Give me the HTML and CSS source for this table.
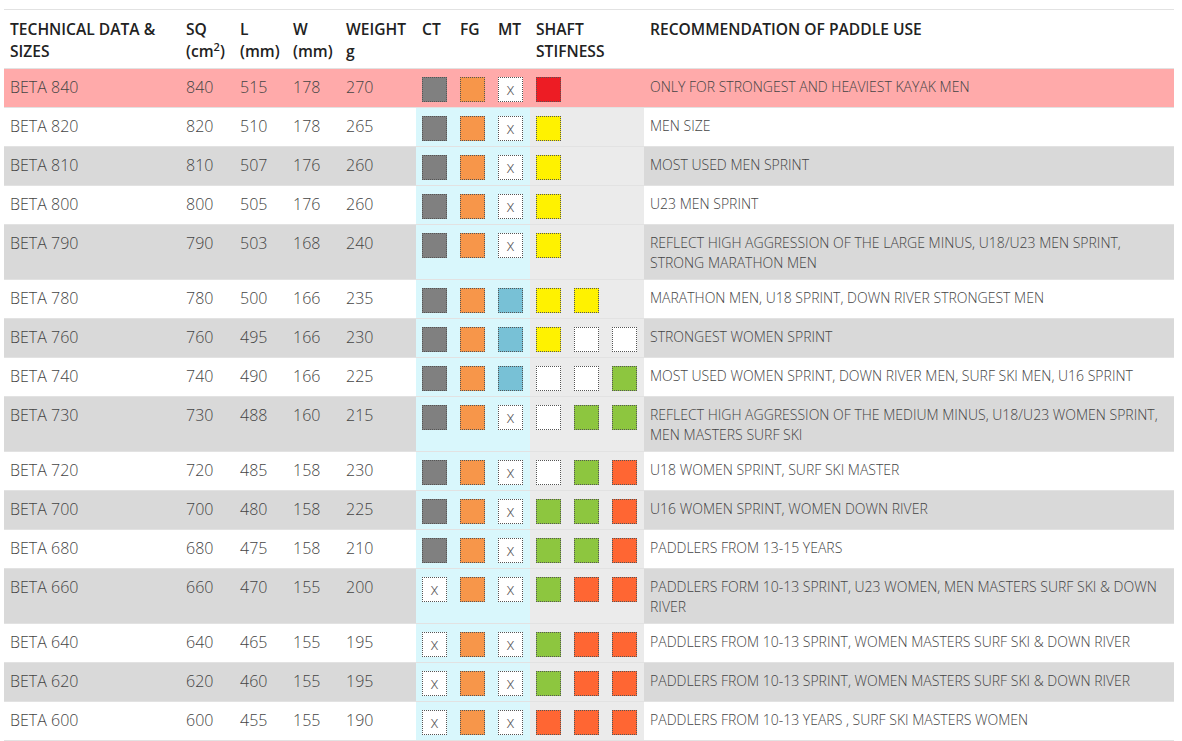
FILE: index.html
```html
<!DOCTYPE html>
<html>
<head>
<meta charset="utf-8">
<link rel="stylesheet" href="styles.css">
</head>
<body>
<div class="wrap">
<table class="spec">
  <colgroup>
    <col class="c-name"><col class="c-num"><col class="c-num2"><col class="c-num2"><col class="c-wt">
    <col class="c-box"><col class="c-box"><col class="c-box">
    <col class="c-box"><col class="c-box"><col class="c-box">
    <col class="c-rec">
  </colgroup>
  <thead>
    <tr>
      <th>TECHNICAL DATA &amp;<br>SIZES</th>
      <th>SQ<br>(cm<sup>2</sup>)</th>
      <th>L<br>(mm)</th>
      <th>W<br>(mm)</th>
      <th>WEIGHT<br>g</th>
      <th>CT</th>
      <th>FG</th>
      <th>MT</th>
      <th colspan="3">SHAFT<br>STIFNESS</th>
      <th>RECOMMENDATION OF PADDLE USE</th>
    </tr>
  </thead>
  <tbody id="rows"></tbody>
</table>
</div>
<script src="app.js"></script>
</body>
</html>
```

FILE: styles.css
```css
html, body {
  margin: 0;
  padding: 0;
  background: #fff;
}
.wrap {
  padding: 9px 8px 0 4px;
}
.spec {
  width: 1170px;
  table-layout: fixed;
  border-collapse: collapse;
  font-family: "Open Sans", "Liberation Sans", sans-serif;
  color: #444;
}
.c-name { width: 176px; }
.c-num { width: 54px; }
.c-num2 { width: 53px; }
.c-wt { width: 76px; }
.c-box { width: 38px; }
.c-rec { width: 530px; }

.spec thead tr {
  border-top: 1px solid #e2e2e2;
  border-bottom: 1px solid #e2e2e2;
}
.spec th {
  text-align: left;
  vertical-align: top;
  font-size: 15.6px;
  font-weight: 600;
  line-height: 22px;
  color: #222;
  padding: 8px 6px 6px 6px;
  white-space: nowrap;
}
.spec th sup {
  font-size: 11px;
  line-height: 0;
  vertical-align: 6px;
}
.spec td {
  vertical-align: top;
  padding: 6px 6px 8px 6px;
  font-size: 16px;
  line-height: 24px;
  font-weight: 300;
  border-bottom: 1px solid #e2e2e2;
}
.spec td.rec {
  font-size: 14px;
  line-height: 20px;
  padding: 8px 6px 6px 6px;
}
.spec td.bx {
  padding: 8px 0 0 6px;
}
.spec td.g1 { background: #d9f7fc; }
.spec td.g2 { background: #ebebeb; }
.spec tbody tr:nth-child(odd) { background: #d9d9d9; }
.spec tbody tr:nth-child(even) { background: #fff; }
.spec tbody tr.hot,
.spec tbody tr.hot td { background: #ffaaaa; }

.box {
  width: 25px;
  height: 25px;
  box-sizing: border-box;
  border: 1px dotted #555;
  font-size: 16px;
  font-weight: 300;
  line-height: 22px;
  text-align: center;
  color: #555;
}
.k-gray { background: #808080; }
.k-org { background: #f7964a; }
.k-blue { background: #78c1d6; }
.k-yel { background: #fff200; }
.k-grn { background: #8dc63f; }
.k-ro { background: #ff6633; }
.k-red { background: #ed1c24; }
.k-x, .k-w { background: #fff; }
```

FILE: app.js
```js
var data = [
  ["BETA 840", 840, 515, 178, 270, "gray", "org", "x", ["red"], "ONLY FOR STRONGEST AND HEAVIEST KAYAK MEN", true],
  ["BETA 820", 820, 510, 178, 265, "gray", "org", "x", ["yel"], "MEN SIZE"],
  ["BETA 810", 810, 507, 176, 260, "gray", "org", "x", ["yel"], "MOST USED MEN SPRINT"],
  ["BETA 800", 800, 505, 176, 260, "gray", "org", "x", ["yel"], "U23 MEN SPRINT"],
  ["BETA 790", 790, 503, 168, 240, "gray", "org", "x", ["yel"], "REFLECT HIGH AGGRESSION OF THE LARGE MINUS, U18/U23 MEN SPRINT, STRONG MARATHON MEN"],
  ["BETA 780", 780, 500, 166, 235, "gray", "org", "blue", ["yel", "yel"], "MARATHON MEN, U18 SPRINT, DOWN RIVER STRONGEST MEN"],
  ["BETA 760", 760, 495, 166, 230, "gray", "org", "blue", ["yel", "w", "w"], "STRONGEST WOMEN SPRINT"],
  ["BETA 740", 740, 490, 166, 225, "gray", "org", "blue", ["w", "w", "grn"], "MOST USED WOMEN SPRINT, DOWN RIVER MEN, SURF SKI MEN, U16 SPRINT"],
  ["BETA 730", 730, 488, 160, 215, "gray", "org", "x", ["w", "grn", "grn"], "REFLECT HIGH AGGRESSION OF THE MEDIUM MINUS, U18/U23 WOMEN SPRINT, MEN MASTERS SURF SKI"],
  ["BETA 720", 720, 485, 158, 230, "gray", "org", "x", ["w", "grn", "ro"], "U18 WOMEN SPRINT, SURF SKI MASTER"],
  ["BETA 700", 700, 480, 158, 225, "gray", "org", "x", ["grn", "grn", "ro"], "U16 WOMEN SPRINT, WOMEN DOWN RIVER"],
  ["BETA 680", 680, 475, 158, 210, "gray", "org", "x", ["grn", "grn", "ro"], "PADDLERS FROM 13-15 YEARS"],
  ["BETA 660", 660, 470, 155, 200, "x", "org", "x", ["grn", "ro", "ro"], "PADDLERS FORM 10-13 SPRINT, U23 WOMEN, MEN MASTERS SURF SKI & DOWN RIVER"],
  ["BETA 640", 640, 465, 155, 195, "x", "org", "x", ["grn", "ro", "ro"], "PADDLERS FROM 10-13 SPRINT, WOMEN MASTERS SURF SKI & DOWN RIVER"],
  ["BETA 620", 620, 460, 155, 195, "x", "org", "x", ["grn", "ro", "ro"], "PADDLERS FROM 10-13 SPRINT, WOMEN MASTERS SURF SKI & DOWN RIVER"],
  ["BETA 600", 600, 455, 155, 190, "x", "org", "x", ["ro", "ro", "ro"], "PADDLERS FROM 10-13 YEARS , SURF SKI MASTERS WOMEN"]
];

function esc(s) {
  return String(s).replace(/&/g, "&amp;").replace(/</g, "&lt;");
}
function box(k, grp) {
  var td = '<td class="bx ' + grp + '">';
  if (!k) return td + '</td>';
  return td + '<div class="box k-' + k + '">' + (k === "x" ? "x" : "") + '</div></td>';
}
var html = "";
data.forEach(function (r) {
  html += '<tr' + (r[10] ? ' class="hot"' : '') + '>';
  html += '<td>' + r[0] + '</td><td>' + r[1] + '</td><td>' + r[2] + '</td><td>' + r[3] + '</td><td>' + r[4] + '</td>';
  html += box(r[5], "g1") + box(r[6], "g1") + box(r[7], "g1");
  for (var i = 0; i < 3; i++) html += box(r[8][i], "g2");
  html += '<td class="rec">' + esc(r[9]) + '</td></tr>';
});
document.getElementById("rows").innerHTML = html;
```
